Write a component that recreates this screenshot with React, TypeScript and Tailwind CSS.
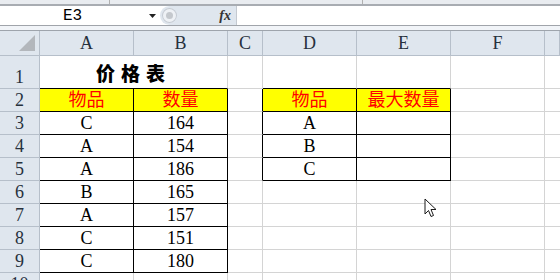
import React from 'react';

const COLS = ['A', 'B', 'C', 'D', 'E', 'F', ''];

const LEFT: [string, number][] = [
  ['C', 164],
  ['A', 154],
  ['A', 186],
  ['B', 165],
  ['A', 157],
  ['C', 151],
  ['C', 180],
];
const RIGHT = ['A', 'B', 'C'];

const cell = 'flex items-center justify-center border-r border-b border-[#d4d4d4] bg-white';
const serif = { fontFamily: '"Liberation Serif", "Noto Sans CJK SC", serif' };

function RowHead({ n, tall }: { n: number; tall?: boolean }) {
  return (
    <div
      className={
        'flex justify-center border-r border-b border-[#b6bfca] bg-[#dfe6ee] text-[18px] leading-none text-[#27313d] ' +
        (tall ? 'items-end pb-[2px]' : 'items-center')
      }
    >
      {n}
    </div>
  );
}

function Cursor() {
  return (
    <svg className="absolute left-[424px] top-[198px]" width="14" height="21" viewBox="0 0 14 21">
      <path
        d="M1 1 L1 16 L4.5 12.5 L7 18.5 L9.5 17.5 L7 11.5 L12 11.5 Z"
        fill="#fff"
        stroke="#1a1a1a"
        strokeWidth="1"
        strokeLinejoin="round"
      />
    </svg>
  );
}

export default function App() {
  return (
    <div className="relative h-[280px] w-[560px] overflow-hidden bg-white" style={serif}>
      {/* ribbon remnant */}
      <div className="flex h-[4px] bg-[#e9ecf0]">
        <div className="w-[110px] border-r border-[#b0b0b0]" />
        <div className="w-[253px] border-r border-[#b0b0b0]" />
      </div>
      <div className="h-[2px] bg-[#a8acb2]" />

      {/* formula bar */}
      <div className="flex h-[19px] bg-white">
        <div className="flex w-[145px] items-center justify-center text-[16px] leading-none text-black" style={{ fontFamily: '"Liberation Mono", monospace' }}>
          E3
        </div>
        <div className="flex w-[15px] items-center justify-center">
          <svg width="7" height="4" viewBox="0 0 7 4"><path d="M0 0 H7 L3.5 4 Z" fill="#222" /></svg>
        </div>
        <div className="flex w-[77px] items-center rounded-l-full border-r border-[#c4c9d0] bg-[#dfe6ee] pl-[2px]">
          <div className="flex h-[15px] w-[15px] items-center justify-center rounded-full bg-[#eef1f5] shadow-[inset_0_0_0_1px_#c5cbd3]">
            <div className="h-[7px] w-[7px] rounded-full bg-[#c4c8cd]" />
          </div>
          <span className="ml-auto mr-[5px] text-[14px] italic font-bold leading-none text-[#333]">fx</span>
        </div>
        <div className="flex-1" />
      </div>
      <div className="h-[1px] bg-[#a0a4aa]" />
      <div className="h-[4px] bg-[#f1f4f8]" />
      <div className="h-[1px] bg-[#9ea4ac]" />

      {/* sheet grid */}
      <div className="grid grid-cols-[40px_94px_94px_35px_94px_94px_94px_1fr] grid-rows-[25px_33px_repeat(9,23px)]">
        {/* column header */}
        <div className="relative border-r border-b border-[#b6bfca] bg-[#dfe6ee]">
          <svg className="absolute bottom-[4px] right-[4px]" width="16" height="16" viewBox="0 0 16 16">
            <path d="M16 0 L16 16 L0 16 Z" fill="#b3b7bc" />
          </svg>
        </div>
        {COLS.map((c, i) => (
          <div
            key={i}
            className="flex items-center justify-center border-r border-b border-[#b6bfca] bg-[#dfe6ee] text-[18px] leading-none text-[#27313d]"
          >
            {c}
          </div>
        ))}

        {/* row 1 */}
        <RowHead n={1} tall />
        <div className="col-span-2 flex items-center justify-center border-r border-b border-r-[#d4d4d4] border-b-black bg-white pt-[1px]">
          <span className="text-[19px] font-black leading-none tracking-[6px] text-black" style={{ fontFamily: '"Noto Sans CJK SC", sans-serif' }}>
            价格表
          </span>
        </div>
        <div className={cell} />
        <div className="border-r border-b border-r-[#d4d4d4] border-b-black bg-white" />
        <div className="border-r border-b border-r-[#d4d4d4] border-b-black bg-white" />
        <div className={cell} />
        <div className="border-b border-[#d4d4d4] bg-white" />

        {/* row 2 headers */}
        <RowHead n={2} />
        <div className="flex items-center justify-center border-r border-b border-black bg-[#ffff00] text-[18px] leading-none text-[#ff0000]">物品</div>
        <div className="flex items-center justify-center border-r border-b border-black bg-[#ffff00] text-[18px] leading-none text-[#ff0000]">数量</div>
        <div className="border-r border-b border-r-black border-b-[#d4d4d4] bg-white" />
        <div className="flex items-center justify-center border-r border-b border-black bg-[#ffff00] text-[18px] leading-none text-[#ff0000]">物品</div>
        <div className="flex items-center justify-center border-r border-b border-black bg-[#ffff00] text-[18px] leading-none text-[#ff0000]">最大数量</div>
        <div className={cell} />
        <div className="border-b border-[#d4d4d4] bg-white" />

        {/* data rows */}
        {LEFT.map(([item, qty], r) => (
          <React.Fragment key={r}>
            <RowHead n={r + 3} />
            <div className="flex items-center justify-center border-r border-b border-black bg-white text-[18px] leading-none text-black">{item}</div>
            <div className="flex items-center justify-center border-r border-b border-black bg-white text-[18px] leading-none text-black">{qty}</div>
            {r < RIGHT.length ? (
              <>
                <div className="border-r border-b border-r-black border-b-[#d4d4d4] bg-white" />
                <div className="flex items-center justify-center border-r border-b border-black bg-white text-[18px] leading-none text-black">{RIGHT[r]}</div>
                <div className="border-r border-b border-black bg-white" />
              </>
            ) : (
              <>
                <div className={cell} />
                <div className={cell} />
                <div className={cell} />
              </>
            )}
            <div className={cell} />
            <div className="border-b border-[#d4d4d4] bg-white" />
          </React.Fragment>
        ))}

        {/* row 10 */}
        <RowHead n={10} />
        <div className={cell} />
        <div className={cell} />
        <div className={cell} />
        <div className={cell} />
        <div className={cell} />
        <div className={cell} />
        <div className="border-b border-[#d4d4d4] bg-white" />
      </div>

      <Cursor />
    </div>
  );
}
